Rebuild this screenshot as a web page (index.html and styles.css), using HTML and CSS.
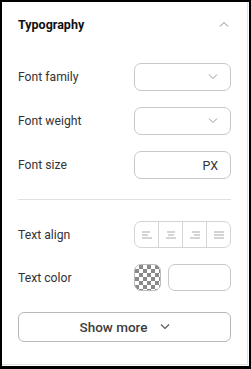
FILE: index.html
```html
<!DOCTYPE html>
<html lang="en">
<head>
    <meta charset="UTF-8">
    <meta name="viewport" content="width=device-width, initial-scale=1.0">
    <title>Typography</title>
    <link rel="stylesheet" href="styles.css">
</head>
<body>
    <div class="frame">
        <div class="panel">
            <div class="panel-header">
                <h2>Typography</h2>
                <svg class="chev" width="10" height="6" viewBox="0 0 10 6"><path d="M1 5.5 L5 1.5 L9 5.5" fill="none" stroke="#888" stroke-width="1"/></svg>
            </div>

            <div class="row">
                <label>Font family</label>
                <div class="field select">
                    <svg class="chev" width="10" height="6" viewBox="0 0 10 6"><path d="M1 0.5 L5 4.5 L9 0.5" fill="none" stroke="#999" stroke-width="1"/></svg>
                </div>
            </div>
            <div class="row">
                <label>Font weight</label>
                <div class="field select">
                    <svg class="chev" width="10" height="6" viewBox="0 0 10 6"><path d="M1 0.5 L5 4.5 L9 0.5" fill="none" stroke="#999" stroke-width="1"/></svg>
                </div>
            </div>
            <div class="row">
                <label>Font size</label>
                <div class="field unit">PX</div>
            </div>

            <hr class="divider">

            <div class="row short">
                <label>Text align</label>
                <div class="align-group">
                    <span class="align-btn">
                        <svg width="10" height="8" viewBox="0 0 10 8"><path d="M0 1 H8 M0 4 H6 M0 7 H10" stroke="#aaa" stroke-width="1"/></svg>
                    </span>
                    <span class="align-btn">
                        <svg width="10" height="8" viewBox="0 0 10 8"><path d="M1 1 H9 M2 4 H8 M0 7 H10" stroke="#aaa" stroke-width="1"/></svg>
                    </span>
                    <span class="align-btn">
                        <svg width="10" height="8" viewBox="0 0 10 8"><path d="M2 1 H10 M4 4 H10 M0 7 H10" stroke="#aaa" stroke-width="1"/></svg>
                    </span>
                    <span class="align-btn">
                        <svg width="10" height="8" viewBox="0 0 10 8"><path d="M0 1 H10 M0 4 H10 M0 7 H10" stroke="#aaa" stroke-width="1"/></svg>
                    </span>
                </div>
            </div>
            <div class="row short">
                <label>Text color</label>
                <div class="color-pick">
                    <span class="swatch"></span>
                    <span class="field color-value"></span>
                </div>
            </div>

            <button class="show-more">
                Show more
                <svg width="10" height="6" viewBox="0 0 10 6"><path d="M1 0.5 L5 4.5 L9 0.5" fill="none" stroke="#555" stroke-width="1.1"/></svg>
            </button>
        </div>
    </div>
</body>
</html>
```

FILE: styles.css
```css
* {
    box-sizing: border-box;
}
body {
    margin: 0;
    font-family: Roboto, "Liberation Sans", Arial, sans-serif;
    background-color: #fff;
    color: #333;
}
.frame {
    width: 251px;
    height: 369px;
    border: 2px solid #000;
    border-bottom-width: 3px;
    background-color: #fff;
}
.panel {
    width: 246px;
    height: 363px;
    border-right: 1px solid #e2e2e2;
    border-bottom: 1px solid #e2e2e2;
    padding: 12px 16px 0 16px;
}
.panel-header {
    display: flex;
    justify-content: space-between;
    align-items: center;
    height: 20px;
    margin-bottom: 29px;
}
.panel-header h2 {
    margin: 0;
    font-size: 12.5px;
    font-weight: 700;
    color: #111;
}
.panel-header .chev {
    margin-right: 2px;
}
.row {
    display: flex;
    justify-content: space-between;
    align-items: center;
    height: 28px;
    margin-bottom: 16px;
}
.row.short {
    height: 27px;
}
label {
    font-size: 12.2px;
    color: #333;
}
.field {
    border: 1px solid #c8c8c8;
    border-radius: 7px;
    background-color: #fff;
    height: 100%;
}
.select {
    width: 97px;
    display: flex;
    justify-content: flex-end;
    align-items: center;
    padding-right: 12px;
}
.unit {
    width: 97px;
    display: flex;
    justify-content: flex-end;
    align-items: center;
    padding-right: 12px;
    font-size: 12.5px;
    color: #333;
}
.divider {
    border: none;
    border-top: 1px solid #e0e0e0;
    margin: 20px 0 21px 0;
}
.align-group {
    display: flex;
    width: 97px;
    height: 100%;
    border: 1px solid #d4d4d4;
    border-radius: 7px;
}
.align-btn {
    flex: 1;
    display: flex;
    justify-content: center;
    align-items: center;
    border-left: 1px solid #d4d4d4;
}
.align-btn:first-child {
    border-left: none;
}
.color-pick {
    display: flex;
    gap: 7px;
    height: 100%;
}
.swatch {
    width: 27px;
    height: 27px;
    border: 1px solid #bbb;
    border-radius: 7px;
    background-color: #fff;
    background-image:
        linear-gradient(45deg, #8a8a8a 25%, transparent 25%, transparent 75%, #8a8a8a 75%),
        linear-gradient(45deg, #8a8a8a 25%, transparent 25%, transparent 75%, #8a8a8a 75%);
    background-size: 8px 8px;
    background-position: 0 0, 4px 4px;
}
.color-value {
    width: 63px;
}
.show-more {
    display: flex;
    justify-content: center;
    align-items: center;
    gap: 12px;
    width: 100%;
    height: 30px;
    margin-top: 21px;
    border: 1px solid #b8b8b8;
    border-radius: 6px;
    background-color: #fff;
    font-family: Roboto, "Liberation Sans", Arial, sans-serif;
    font-size: 13.5px;
    font-weight: 500;
    color: #3d3d3d;
    cursor: pointer;
}
```
